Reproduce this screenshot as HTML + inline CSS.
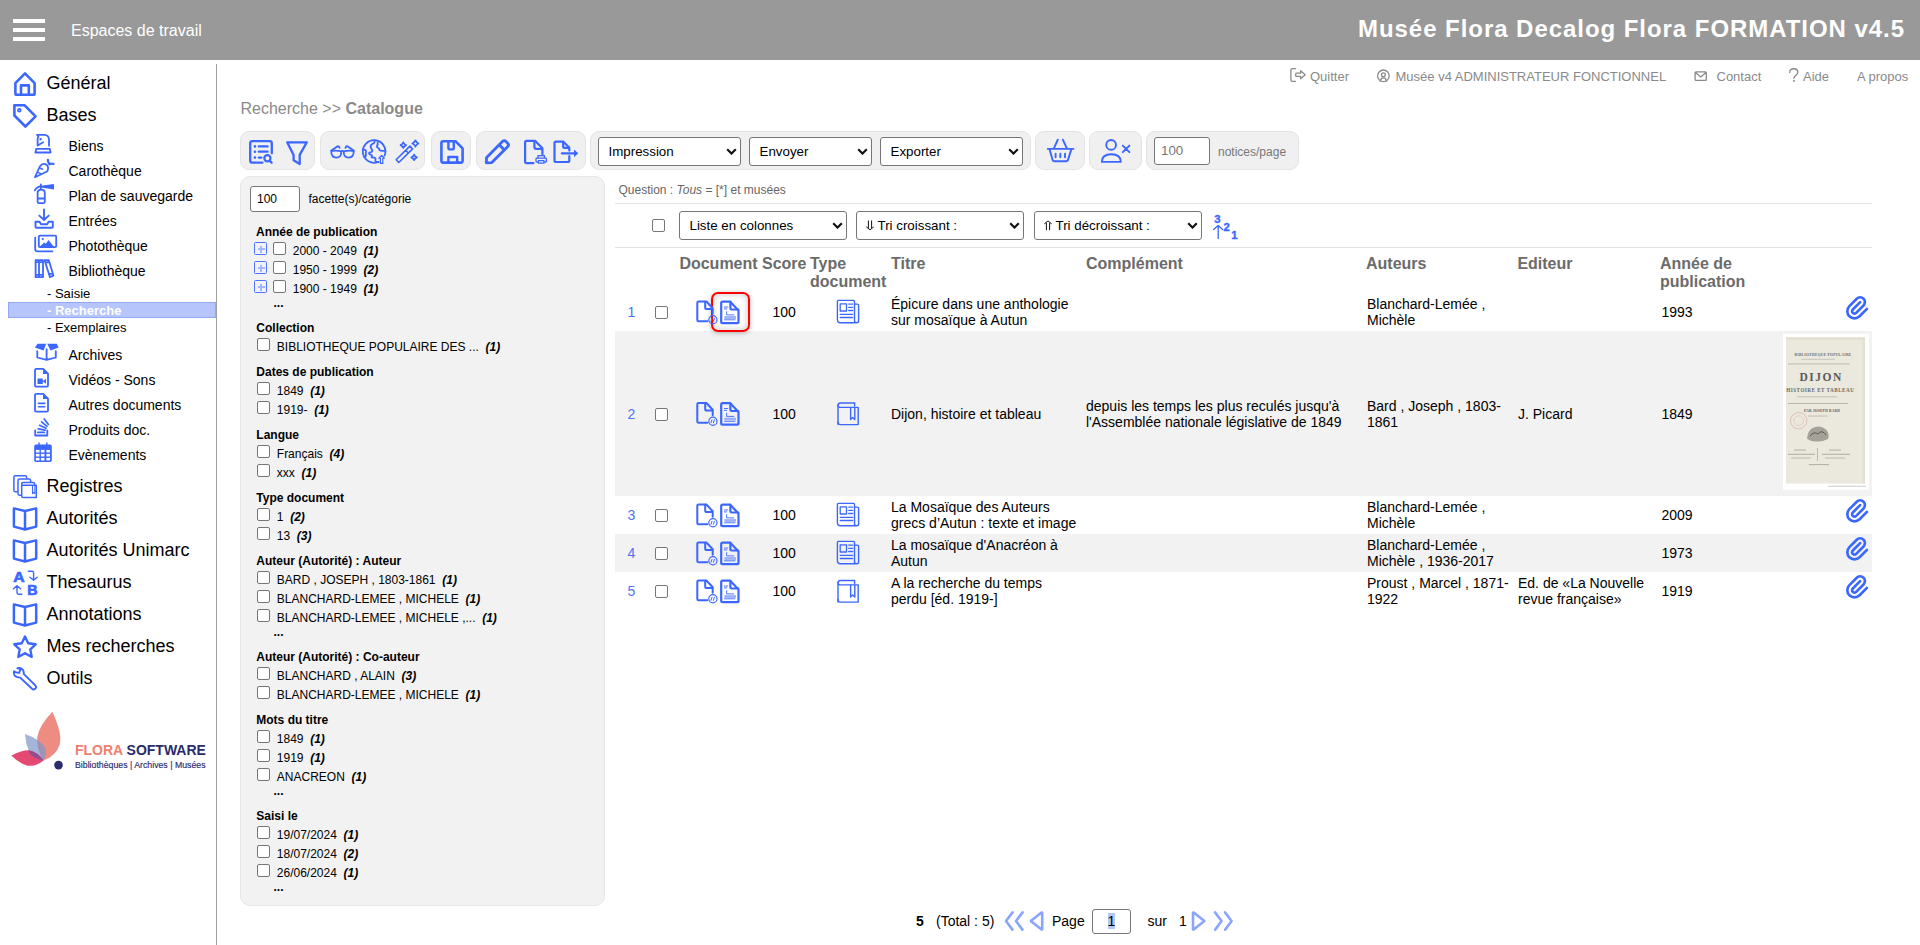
<!DOCTYPE html><html><head><meta charset="utf-8"><style>
html,body{margin:0;padding:0}
body{width:1920px;height:945px;overflow:hidden;position:relative;background:#fff;font-family:"Liberation Sans",sans-serif}
.t{position:absolute;white-space:nowrap}
.b{position:absolute}
.ic{position:absolute;overflow:visible}
.cb{position:absolute;border:1px solid #767676;border-radius:2px;background:#fff}
.sel{position:absolute;border:1px solid #767676;border-radius:3px;background:#fff;color:#000;white-space:nowrap}
.inp{position:absolute;border:1px solid #767676;border-radius:3px;background:#fff;color:#000;white-space:nowrap}
</style></head><body>
<div class="b" style="left:0px;top:0px;width:1920px;height:60px;background:#999"></div>
<div class="b" style="left:13px;top:19px;width:32px;height:4px;background:#fff"></div>
<div class="b" style="left:13px;top:28px;width:32px;height:4px;background:#fff"></div>
<div class="b" style="left:13px;top:37px;width:32px;height:4px;background:#fff"></div>
<div class="t" style="left:71px;top:23.00px;font-size:16px;line-height:16px;font-weight:normal;color:#fff;font-style:normal;">Espaces de travail</div>
<div class="t" style="right:15px;top:14px;font-size:24px;line-height:30px;font-weight:bold;color:#fff;letter-spacing:0.95px">Musée Flora Decalog Flora FORMATION v4.5</div>
<div class="b" style="left:216px;top:64px;width:1px;height:881px;background:#a0a0a0"></div>
<div class="t" style="left:46.4px;top:74.00px;font-size:18px;line-height:18px;font-weight:normal;color:#000;font-style:normal;">Général</div>
<div class="t" style="left:46.4px;top:106.00px;font-size:18px;line-height:18px;font-weight:normal;color:#000;font-style:normal;">Bases</div>
<div class="t" style="left:46.4px;top:477.00px;font-size:18px;line-height:18px;font-weight:normal;color:#000;font-style:normal;">Registres</div>
<div class="t" style="left:46.4px;top:509.00px;font-size:18px;line-height:18px;font-weight:normal;color:#000;font-style:normal;">Autorités</div>
<div class="t" style="left:46.4px;top:541.00px;font-size:18px;line-height:18px;font-weight:normal;color:#000;font-style:normal;">Autorités Unimarc</div>
<div class="t" style="left:46.4px;top:573.00px;font-size:18px;line-height:18px;font-weight:normal;color:#000;font-style:normal;">Thesaurus</div>
<div class="t" style="left:46.4px;top:605.00px;font-size:18px;line-height:18px;font-weight:normal;color:#000;font-style:normal;">Annotations</div>
<div class="t" style="left:46.4px;top:637.00px;font-size:18px;line-height:18px;font-weight:normal;color:#000;font-style:normal;">Mes recherches</div>
<div class="t" style="left:46.4px;top:669.00px;font-size:18px;line-height:18px;font-weight:normal;color:#000;font-style:normal;">Outils</div>
<div class="t" style="left:68.5px;top:139.00px;font-size:14px;line-height:14px;font-weight:normal;color:#000;font-style:normal;">Biens</div>
<div class="t" style="left:68.5px;top:164.00px;font-size:14px;line-height:14px;font-weight:normal;color:#000;font-style:normal;">Carothèque</div>
<div class="t" style="left:68.5px;top:189.00px;font-size:14px;line-height:14px;font-weight:normal;color:#000;font-style:normal;">Plan de sauvegarde</div>
<div class="t" style="left:68.5px;top:214.00px;font-size:14px;line-height:14px;font-weight:normal;color:#000;font-style:normal;">Entrées</div>
<div class="t" style="left:68.5px;top:239.00px;font-size:14px;line-height:14px;font-weight:normal;color:#000;font-style:normal;">Photothèque</div>
<div class="t" style="left:68.5px;top:264.00px;font-size:14px;line-height:14px;font-weight:normal;color:#000;font-style:normal;">Bibliothèque</div>
<div class="t" style="left:68.5px;top:348.00px;font-size:14px;line-height:14px;font-weight:normal;color:#000;font-style:normal;">Archives</div>
<div class="t" style="left:68.5px;top:373.00px;font-size:14px;line-height:14px;font-weight:normal;color:#000;font-style:normal;">Vidéos - Sons</div>
<div class="t" style="left:68.5px;top:398.00px;font-size:14px;line-height:14px;font-weight:normal;color:#000;font-style:normal;">Autres documents</div>
<div class="t" style="left:68.5px;top:423.00px;font-size:14px;line-height:14px;font-weight:normal;color:#000;font-style:normal;">Produits doc.</div>
<div class="t" style="left:68.5px;top:448.00px;font-size:14px;line-height:14px;font-weight:normal;color:#000;font-style:normal;">Evènements</div>
<div class="b" style="left:8px;top:302px;width:206px;height:14px;background:#b6c5fb;border:1px solid #93a9f7"></div>
<div class="t" style="left:47px;top:287.00px;font-size:13px;line-height:13px;font-weight:normal;color:#000;font-style:normal;">- Saisie</div>
<div class="t" style="left:47px;top:304.00px;font-size:13px;line-height:13px;font-weight:bold;color:#fff;font-style:normal;">- Recherche</div>
<div class="t" style="left:47px;top:321.00px;font-size:13px;line-height:13px;font-weight:normal;color:#000;font-style:normal;">- Exemplaires</div>
<div class="t" style="left:1310px;top:70.00px;font-size:13px;line-height:13px;font-weight:normal;color:#8a8a8a;font-style:normal;">Quitter</div>
<div class="t" style="left:1395.5px;top:70.00px;font-size:13px;line-height:13px;font-weight:normal;color:#8a8a8a;font-style:normal;">Musée v4 ADMINISTRATEUR FONCTIONNEL</div>
<div class="t" style="left:1716.5px;top:70.00px;font-size:13px;line-height:13px;font-weight:normal;color:#8a8a8a;font-style:normal;">Contact</div>
<div class="t" style="left:1803px;top:70.00px;font-size:13px;line-height:13px;font-weight:normal;color:#8a8a8a;font-style:normal;">Aide</div>
<div class="t" style="left:1857px;top:70.00px;font-size:13px;line-height:13px;font-weight:normal;color:#8a8a8a;font-style:normal;">A propos</div>
<div class="t" style="left:240.5px;top:101.00px;font-size:16px;line-height:16px;font-weight:normal;color:#8a8a8a;font-style:normal;">Recherche &gt;&gt; <b>Catalogue</b></div>
<div class="b" style="left:240px;top:131px;width:75px;height:39px;background:#f0f0f0;border:1px solid #e4e4e4;border-radius:9px;box-sizing:border-box"></div>
<div class="b" style="left:320px;top:131px;width:105px;height:39px;background:#f0f0f0;border:1px solid #e4e4e4;border-radius:9px;box-sizing:border-box"></div>
<div class="b" style="left:431px;top:131px;width:40px;height:39px;background:#f0f0f0;border:1px solid #e4e4e4;border-radius:9px;box-sizing:border-box"></div>
<div class="b" style="left:476px;top:131px;width:110px;height:39px;background:#f0f0f0;border:1px solid #e4e4e4;border-radius:9px;box-sizing:border-box"></div>
<div class="b" style="left:590px;top:131px;width:441px;height:39px;background:#f0f0f0;border:1px solid #e4e4e4;border-radius:9px;box-sizing:border-box"></div>
<div class="b" style="left:1035px;top:131px;width:50px;height:39px;background:#f0f0f0;border:1px solid #e4e4e4;border-radius:9px;box-sizing:border-box"></div>
<div class="b" style="left:1089px;top:131px;width:53px;height:39px;background:#f0f0f0;border:1px solid #e4e4e4;border-radius:9px;box-sizing:border-box"></div>
<div class="b" style="left:1146px;top:131px;width:153px;height:39px;background:#f0f0f0;border:1px solid #e4e4e4;border-radius:9px;box-sizing:border-box"></div>
<div class="sel" style="left:598px;top:137px;width:141px;height:27px;font-size:13.33px;line-height:27px"><span style="padding-left:9.5px">Impression</span><svg style="position:absolute;right:2.6px;top:9.9px" width="11" height="7.2" viewBox="0 0 11 7.2"><path d="M1.2 1.2 L5.5 5.6 L9.8 1.2" stroke="#111" stroke-width="2.1" fill="none"/></svg></div>
<div class="sel" style="left:749px;top:137px;width:121px;height:27px;font-size:13.33px;line-height:27px"><span style="padding-left:9.5px">Envoyer</span><svg style="position:absolute;right:2.6px;top:9.9px" width="11" height="7.2" viewBox="0 0 11 7.2"><path d="M1.2 1.2 L5.5 5.6 L9.8 1.2" stroke="#111" stroke-width="2.1" fill="none"/></svg></div>
<div class="sel" style="left:880px;top:137px;width:141px;height:27px;font-size:13.33px;line-height:27px"><span style="padding-left:9.5px">Exporter</span><svg style="position:absolute;right:2.6px;top:9.9px" width="11" height="7.2" viewBox="0 0 11 7.2"><path d="M1.2 1.2 L5.5 5.6 L9.8 1.2" stroke="#111" stroke-width="2.1" fill="none"/></svg></div>
<div class="inp" style="left:1154px;top:137px;width:54px;height:26px;font-size:13.33px;line-height:26px;color:#777;padding-left:0"><span style="padding-left:6px">100</span></div>
<div class="t" style="left:1218px;top:146.00px;font-size:12px;line-height:12px;font-weight:normal;color:#777;font-style:normal;">notices/page</div>
<div class="b" style="left:240px;top:176px;width:365px;height:730px;background:#f2f2f2;border:1px solid #e6e6e6;border-radius:10px;box-sizing:border-box"></div>
<div class="inp" style="left:250px;top:186px;width:48px;height:24px;font-size:12px;line-height:24px"><span style="padding-left:6px">100</span></div>
<div class="t" style="left:308.5px;top:193.00px;font-size:12px;line-height:12px;font-weight:normal;color:#000;font-style:normal;">facette(s)/catégorie</div>
<div class="t" style="left:256px;top:226.00px;font-size:12px;line-height:12px;font-weight:bold;color:#000;font-style:normal;">Année de publication</div>
<div class="b" style="left:254px;top:242px;width:11.4px;height:11.4px;border:1.3px solid #4f72ff;border-radius:1.5px"></div>
<div class="b" style="left:257.5px;top:248.0px;width:7px;height:2px;background:#a3b6ff"></div>
<div class="b" style="left:260.0px;top:245.5px;width:2px;height:7px;background:#a3b6ff"></div>
<div class="cb" style="left:273px;top:242px;width:11px;height:11px"></div>
<div class="t" style="left:292.75px;top:245.00px;font-size:12px;line-height:12px;font-weight:normal;color:#000;font-style:normal;">2000 - 2049&nbsp;&nbsp;<b><i>(1)</i></b></div>
<div class="b" style="left:254px;top:261px;width:11.4px;height:11.4px;border:1.3px solid #4f72ff;border-radius:1.5px"></div>
<div class="b" style="left:257.5px;top:267.0px;width:7px;height:2px;background:#a3b6ff"></div>
<div class="b" style="left:260.0px;top:264.5px;width:2px;height:7px;background:#a3b6ff"></div>
<div class="cb" style="left:273px;top:261px;width:11px;height:11px"></div>
<div class="t" style="left:292.75px;top:264.00px;font-size:12px;line-height:12px;font-weight:normal;color:#000;font-style:normal;">1950 - 1999&nbsp;&nbsp;<b><i>(2)</i></b></div>
<div class="b" style="left:254px;top:280px;width:11.4px;height:11.4px;border:1.3px solid #4f72ff;border-radius:1.5px"></div>
<div class="b" style="left:257.5px;top:286.0px;width:7px;height:2px;background:#a3b6ff"></div>
<div class="b" style="left:260.0px;top:283.5px;width:2px;height:7px;background:#a3b6ff"></div>
<div class="cb" style="left:273px;top:280px;width:11px;height:11px"></div>
<div class="t" style="left:292.75px;top:283.00px;font-size:12px;line-height:12px;font-weight:normal;color:#000;font-style:normal;">1900 - 1949&nbsp;&nbsp;<b><i>(1)</i></b></div>
<div class="t" style="left:273.5px;top:297.00px;font-size:12px;line-height:12px;font-weight:bold;color:#000;font-style:normal;">...</div>
<div class="t" style="left:256.3px;top:322.00px;font-size:12px;line-height:12px;font-weight:bold;color:#000;font-style:normal;">Collection</div>
<div class="cb" style="left:257px;top:338px;width:11px;height:11px"></div>
<div class="t" style="left:276.8px;top:341.00px;font-size:12px;line-height:12px;font-weight:normal;color:#000;font-style:normal;">BIBLIOTHEQUE POPULAIRE DES ...&nbsp;&nbsp;<b><i>(1)</i></b></div>
<div class="t" style="left:256.3px;top:366.00px;font-size:12px;line-height:12px;font-weight:bold;color:#000;font-style:normal;">Dates de publication</div>
<div class="cb" style="left:257px;top:382px;width:11px;height:11px"></div>
<div class="t" style="left:276.8px;top:385.00px;font-size:12px;line-height:12px;font-weight:normal;color:#000;font-style:normal;">1849&nbsp;&nbsp;<b><i>(1)</i></b></div>
<div class="cb" style="left:257px;top:401px;width:11px;height:11px"></div>
<div class="t" style="left:276.8px;top:404.00px;font-size:12px;line-height:12px;font-weight:normal;color:#000;font-style:normal;">1919-&nbsp;&nbsp;<b><i>(1)</i></b></div>
<div class="t" style="left:256.3px;top:429.00px;font-size:12px;line-height:12px;font-weight:bold;color:#000;font-style:normal;">Langue</div>
<div class="cb" style="left:257px;top:445px;width:11px;height:11px"></div>
<div class="t" style="left:276.8px;top:448.00px;font-size:12px;line-height:12px;font-weight:normal;color:#000;font-style:normal;">Français&nbsp;&nbsp;<b><i>(4)</i></b></div>
<div class="cb" style="left:257px;top:464px;width:11px;height:11px"></div>
<div class="t" style="left:276.8px;top:467.00px;font-size:12px;line-height:12px;font-weight:normal;color:#000;font-style:normal;">xxx&nbsp;&nbsp;<b><i>(1)</i></b></div>
<div class="t" style="left:256.3px;top:492.00px;font-size:12px;line-height:12px;font-weight:bold;color:#000;font-style:normal;">Type document</div>
<div class="cb" style="left:257px;top:508px;width:11px;height:11px"></div>
<div class="t" style="left:276.8px;top:511.00px;font-size:12px;line-height:12px;font-weight:normal;color:#000;font-style:normal;">1&nbsp;&nbsp;<b><i>(2)</i></b></div>
<div class="cb" style="left:257px;top:527px;width:11px;height:11px"></div>
<div class="t" style="left:276.8px;top:530.00px;font-size:12px;line-height:12px;font-weight:normal;color:#000;font-style:normal;">13&nbsp;&nbsp;<b><i>(3)</i></b></div>
<div class="t" style="left:256.3px;top:555.00px;font-size:12px;line-height:12px;font-weight:bold;color:#000;font-style:normal;">Auteur (Autorité) : Auteur</div>
<div class="cb" style="left:257px;top:571px;width:11px;height:11px"></div>
<div class="t" style="left:276.8px;top:574.00px;font-size:12px;line-height:12px;font-weight:normal;color:#000;font-style:normal;">BARD , JOSEPH , 1803-1861&nbsp;&nbsp;<b><i>(1)</i></b></div>
<div class="cb" style="left:257px;top:590px;width:11px;height:11px"></div>
<div class="t" style="left:276.8px;top:593.00px;font-size:12px;line-height:12px;font-weight:normal;color:#000;font-style:normal;">BLANCHARD-LEMEE , MICHELE&nbsp;&nbsp;<b><i>(1)</i></b></div>
<div class="cb" style="left:257px;top:609px;width:11px;height:11px"></div>
<div class="t" style="left:276.8px;top:612.00px;font-size:12px;line-height:12px;font-weight:normal;color:#000;font-style:normal;">BLANCHARD-LEMEE , MICHELE ,...&nbsp;&nbsp;<b><i>(1)</i></b></div>
<div class="t" style="left:273.5px;top:626.00px;font-size:12px;line-height:12px;font-weight:bold;color:#000;font-style:normal;">...</div>
<div class="t" style="left:256.3px;top:651.00px;font-size:12px;line-height:12px;font-weight:bold;color:#000;font-style:normal;">Auteur (Autorité) : Co-auteur</div>
<div class="cb" style="left:257px;top:667px;width:11px;height:11px"></div>
<div class="t" style="left:276.8px;top:670.00px;font-size:12px;line-height:12px;font-weight:normal;color:#000;font-style:normal;">BLANCHARD , ALAIN&nbsp;&nbsp;<b><i>(3)</i></b></div>
<div class="cb" style="left:257px;top:686px;width:11px;height:11px"></div>
<div class="t" style="left:276.8px;top:689.00px;font-size:12px;line-height:12px;font-weight:normal;color:#000;font-style:normal;">BLANCHARD-LEMEE , MICHELE&nbsp;&nbsp;<b><i>(1)</i></b></div>
<div class="t" style="left:256.3px;top:714.00px;font-size:12px;line-height:12px;font-weight:bold;color:#000;font-style:normal;">Mots du titre</div>
<div class="cb" style="left:257px;top:730px;width:11px;height:11px"></div>
<div class="t" style="left:276.8px;top:733.00px;font-size:12px;line-height:12px;font-weight:normal;color:#000;font-style:normal;">1849&nbsp;&nbsp;<b><i>(1)</i></b></div>
<div class="cb" style="left:257px;top:749px;width:11px;height:11px"></div>
<div class="t" style="left:276.8px;top:752.00px;font-size:12px;line-height:12px;font-weight:normal;color:#000;font-style:normal;">1919&nbsp;&nbsp;<b><i>(1)</i></b></div>
<div class="cb" style="left:257px;top:768px;width:11px;height:11px"></div>
<div class="t" style="left:276.8px;top:771.00px;font-size:12px;line-height:12px;font-weight:normal;color:#000;font-style:normal;">ANACREON&nbsp;&nbsp;<b><i>(1)</i></b></div>
<div class="t" style="left:273.5px;top:785.00px;font-size:12px;line-height:12px;font-weight:bold;color:#000;font-style:normal;">...</div>
<div class="t" style="left:256.3px;top:810.00px;font-size:12px;line-height:12px;font-weight:bold;color:#000;font-style:normal;">Saisi le</div>
<div class="cb" style="left:257px;top:826px;width:11px;height:11px"></div>
<div class="t" style="left:276.8px;top:829.00px;font-size:12px;line-height:12px;font-weight:normal;color:#000;font-style:normal;">19/07/2024&nbsp;&nbsp;<b><i>(1)</i></b></div>
<div class="cb" style="left:257px;top:845px;width:11px;height:11px"></div>
<div class="t" style="left:276.8px;top:848.00px;font-size:12px;line-height:12px;font-weight:normal;color:#000;font-style:normal;">18/07/2024&nbsp;&nbsp;<b><i>(2)</i></b></div>
<div class="cb" style="left:257px;top:864px;width:11px;height:11px"></div>
<div class="t" style="left:276.8px;top:867.00px;font-size:12px;line-height:12px;font-weight:normal;color:#000;font-style:normal;">26/06/2024&nbsp;&nbsp;<b><i>(1)</i></b></div>
<div class="t" style="left:273.5px;top:881.00px;font-size:12px;line-height:12px;font-weight:bold;color:#000;font-style:normal;">...</div>
<div class="t" style="left:618.5px;top:184.00px;font-size:12px;line-height:12px;font-weight:normal;color:#666;font-style:normal;">Question : <i>Tous</i> = [*] et musées</div>
<div class="b" style="left:615px;top:203px;width:1257px;height:1px;background:#e2e2e2"></div>
<div class="cb" style="left:652px;top:219px;width:11px;height:11px"></div>
<div class="sel" style="left:679px;top:211px;width:166px;height:27px;font-size:13.33px;line-height:27px"><span style="padding-left:9.5px">Liste en colonnes</span><svg style="position:absolute;right:2.6px;top:9.9px" width="11" height="7.2" viewBox="0 0 11 7.2"><path d="M1.2 1.2 L5.5 5.6 L9.8 1.2" stroke="#111" stroke-width="2.1" fill="none"/></svg></div>
<div class="sel" style="left:856px;top:211px;width:166px;height:27px;font-size:13.33px;line-height:27px"><span style="padding-left:20.5px">Tri croissant :</span><svg style="position:absolute;right:2.6px;top:9.9px" width="11" height="7.2" viewBox="0 0 11 7.2"><path d="M1.2 1.2 L5.5 5.6 L9.8 1.2" stroke="#111" stroke-width="2.1" fill="none"/></svg></div>
<div class="sel" style="left:1034px;top:211px;width:166px;height:27px;font-size:13.33px;line-height:27px"><span style="padding-left:20.5px">Tri décroissant :</span><svg style="position:absolute;right:2.6px;top:9.9px" width="11" height="7.2" viewBox="0 0 11 7.2"><path d="M1.2 1.2 L5.5 5.6 L9.8 1.2" stroke="#111" stroke-width="2.1" fill="none"/></svg></div>
<div class="b" style="left:615px;top:247px;width:1257px;height:1px;background:#e2e2e2"></div>
<div class="t" style="left:679.4px;top:256.00px;font-size:16px;line-height:16px;font-weight:bold;color:#6b6b6b;font-style:normal;">Document</div>
<div class="t" style="left:762px;top:256.00px;font-size:16px;line-height:16px;font-weight:bold;color:#6b6b6b;font-style:normal;">Score</div>
<div class="t" style="left:810px;top:256.00px;font-size:16px;line-height:16px;font-weight:bold;color:#6b6b6b;font-style:normal;">Type</div>
<div class="t" style="left:891px;top:256.00px;font-size:16px;line-height:16px;font-weight:bold;color:#6b6b6b;font-style:normal;">Titre</div>
<div class="t" style="left:1086px;top:256.00px;font-size:16px;line-height:16px;font-weight:bold;color:#6b6b6b;font-style:normal;">Complément</div>
<div class="t" style="left:1366px;top:256.00px;font-size:16px;line-height:16px;font-weight:bold;color:#6b6b6b;font-style:normal;">Auteurs</div>
<div class="t" style="left:1517.4px;top:256.00px;font-size:16px;line-height:16px;font-weight:bold;color:#6b6b6b;font-style:normal;">Editeur</div>
<div class="t" style="left:1660px;top:256.00px;font-size:16px;line-height:16px;font-weight:bold;color:#6b6b6b;font-style:normal;">Année de</div>
<div class="t" style="left:810px;top:274.00px;font-size:16px;line-height:16px;font-weight:bold;color:#6b6b6b;font-style:normal;">document</div>
<div class="t" style="left:1660px;top:274.00px;font-size:16px;line-height:16px;font-weight:bold;color:#6b6b6b;font-style:normal;">publication</div>
<div class="b" style="left:615px;top:331px;width:1257px;height:165px;background:#f2f2f2"></div>
<div class="b" style="left:615px;top:534px;width:1257px;height:38px;background:#f2f2f2"></div>
<div class="t" style="left:627.5px;top:305.00px;font-size:14px;line-height:14px;font-weight:normal;color:#4f72f7;font-style:normal;">1</div>
<div class="cb" style="left:655px;top:306px;width:11px;height:11px"></div>
<div class="t" style="left:772.5px;top:305.00px;font-size:14px;line-height:14px;font-weight:normal;color:#000;font-style:normal;">100</div>
<div class="t" style="left:891px;top:297.00px;font-size:14px;line-height:14px;font-weight:normal;color:#000;font-style:normal;">Épicure dans une anthologie</div>
<div class="t" style="left:891px;top:313.00px;font-size:14px;line-height:14px;font-weight:normal;color:#000;font-style:normal;">sur mosaïque à Autun</div>
<div class="t" style="left:1367px;top:297.00px;font-size:14px;line-height:14px;font-weight:normal;color:#000;font-style:normal;">Blanchard-Lemée ,</div>
<div class="t" style="left:1367px;top:313.00px;font-size:14px;line-height:14px;font-weight:normal;color:#000;font-style:normal;">Michèle</div>
<div class="t" style="left:1661.5px;top:305.00px;font-size:14px;line-height:14px;font-weight:normal;color:#000;font-style:normal;">1993</div>
<div class="t" style="left:627.5px;top:407.00px;font-size:14px;line-height:14px;font-weight:normal;color:#4f72f7;font-style:normal;">2</div>
<div class="cb" style="left:655px;top:408px;width:11px;height:11px"></div>
<div class="t" style="left:772.5px;top:407.00px;font-size:14px;line-height:14px;font-weight:normal;color:#000;font-style:normal;">100</div>
<div class="t" style="left:891px;top:407.00px;font-size:14px;line-height:14px;font-weight:normal;color:#000;font-style:normal;">Dijon, histoire et tableau</div>
<div class="t" style="left:1086px;top:399.00px;font-size:14px;line-height:14px;font-weight:normal;color:#000;font-style:normal;">depuis les temps les plus reculés jusqu'à</div>
<div class="t" style="left:1086px;top:415.00px;font-size:14px;line-height:14px;font-weight:normal;color:#000;font-style:normal;">l'Assemblée nationale législative de 1849</div>
<div class="t" style="left:1367px;top:399.00px;font-size:14px;line-height:14px;font-weight:normal;color:#000;font-style:normal;">Bard , Joseph , 1803-</div>
<div class="t" style="left:1367px;top:415.00px;font-size:14px;line-height:14px;font-weight:normal;color:#000;font-style:normal;">1861</div>
<div class="t" style="left:1518px;top:407.00px;font-size:14px;line-height:14px;font-weight:normal;color:#000;font-style:normal;">J. Picard</div>
<div class="t" style="left:1661.5px;top:407.00px;font-size:14px;line-height:14px;font-weight:normal;color:#000;font-style:normal;">1849</div>
<div class="t" style="left:627.5px;top:508.00px;font-size:14px;line-height:14px;font-weight:normal;color:#4f72f7;font-style:normal;">3</div>
<div class="cb" style="left:655px;top:509px;width:11px;height:11px"></div>
<div class="t" style="left:772.5px;top:508.00px;font-size:14px;line-height:14px;font-weight:normal;color:#000;font-style:normal;">100</div>
<div class="t" style="left:891px;top:500.00px;font-size:14px;line-height:14px;font-weight:normal;color:#000;font-style:normal;">La Mosaïque des Auteurs</div>
<div class="t" style="left:891px;top:516.00px;font-size:14px;line-height:14px;font-weight:normal;color:#000;font-style:normal;">grecs d’Autun : texte et image</div>
<div class="t" style="left:1367px;top:500.00px;font-size:14px;line-height:14px;font-weight:normal;color:#000;font-style:normal;">Blanchard-Lemée ,</div>
<div class="t" style="left:1367px;top:516.00px;font-size:14px;line-height:14px;font-weight:normal;color:#000;font-style:normal;">Michèle</div>
<div class="t" style="left:1661.5px;top:508.00px;font-size:14px;line-height:14px;font-weight:normal;color:#000;font-style:normal;">2009</div>
<div class="t" style="left:627.5px;top:546.00px;font-size:14px;line-height:14px;font-weight:normal;color:#4f72f7;font-style:normal;">4</div>
<div class="cb" style="left:655px;top:547px;width:11px;height:11px"></div>
<div class="t" style="left:772.5px;top:546.00px;font-size:14px;line-height:14px;font-weight:normal;color:#000;font-style:normal;">100</div>
<div class="t" style="left:891px;top:538.00px;font-size:14px;line-height:14px;font-weight:normal;color:#000;font-style:normal;">La mosaïque d'Anacréon à</div>
<div class="t" style="left:891px;top:554.00px;font-size:14px;line-height:14px;font-weight:normal;color:#000;font-style:normal;">Autun</div>
<div class="t" style="left:1367px;top:538.00px;font-size:14px;line-height:14px;font-weight:normal;color:#000;font-style:normal;">Blanchard-Lemée ,</div>
<div class="t" style="left:1367px;top:554.00px;font-size:14px;line-height:14px;font-weight:normal;color:#000;font-style:normal;">Michèle , 1936-2017</div>
<div class="t" style="left:1661.5px;top:546.00px;font-size:14px;line-height:14px;font-weight:normal;color:#000;font-style:normal;">1973</div>
<div class="t" style="left:627.5px;top:584.00px;font-size:14px;line-height:14px;font-weight:normal;color:#4f72f7;font-style:normal;">5</div>
<div class="cb" style="left:655px;top:585px;width:11px;height:11px"></div>
<div class="t" style="left:772.5px;top:584.00px;font-size:14px;line-height:14px;font-weight:normal;color:#000;font-style:normal;">100</div>
<div class="t" style="left:891px;top:576.00px;font-size:14px;line-height:14px;font-weight:normal;color:#000;font-style:normal;">A la recherche du temps</div>
<div class="t" style="left:891px;top:592.00px;font-size:14px;line-height:14px;font-weight:normal;color:#000;font-style:normal;">perdu [éd. 1919-]</div>
<div class="t" style="left:1367px;top:576.00px;font-size:14px;line-height:14px;font-weight:normal;color:#000;font-style:normal;">Proust , Marcel , 1871-</div>
<div class="t" style="left:1367px;top:592.00px;font-size:14px;line-height:14px;font-weight:normal;color:#000;font-style:normal;">1922</div>
<div class="t" style="left:1518px;top:576.00px;font-size:14px;line-height:14px;font-weight:normal;color:#000;font-style:normal;">Ed. de «La Nouvelle</div>
<div class="t" style="left:1518px;top:592.00px;font-size:14px;line-height:14px;font-weight:normal;color:#000;font-style:normal;">revue française»</div>
<div class="t" style="left:1661.5px;top:584.00px;font-size:14px;line-height:14px;font-weight:normal;color:#000;font-style:normal;">1919</div>
<div class="b" style="left:710.5px;top:291.5px;width:35px;height:36px;border:2px solid #f00;border-radius:7px;box-shadow:0 1px 5px rgba(0,0,0,0.28), inset 0 0 7px rgba(0,0,0,0.22)"></div>
<div class="t" style="left:916px;top:914.00px;font-size:14px;line-height:14px;font-weight:bold;color:#000;font-style:normal;">5</div>
<div class="t" style="left:936px;top:914.00px;font-size:14px;line-height:14px;font-weight:normal;color:#000;font-style:normal;">(Total : 5)</div>
<div class="t" style="left:1052px;top:914.00px;font-size:14px;line-height:14px;font-weight:normal;color:#000;font-style:normal;">Page</div>
<div class="inp" style="left:1092px;top:909px;width:37px;height:23px;font-size:14px;line-height:23px;text-align:center"><span style="background:#b3c8f5">1</span></div>
<div class="t" style="left:1147.5px;top:914.00px;font-size:14px;line-height:14px;font-weight:normal;color:#000;font-style:normal;">sur</div>
<div class="t" style="left:1179px;top:914.00px;font-size:14px;line-height:14px;font-weight:normal;color:#000;font-style:normal;">1</div>
<svg style="position:absolute;left:0;top:0;overflow:visible" width="1920" height="945"><defs><filter id="sh" x="-30%" y="-30%" width="160%" height="160%"><feDropShadow dx="0" dy="1" stdDeviation="1.5" flood-color="#000" flood-opacity="0.3"/></filter></defs><path d="M15.4 83.2 L25 73.4 L34.6 83.2 V93.4 Q34.6 94.7 33.3 94.7 H16.7 Q15.4 94.7 15.4 93.4 Z" stroke="#3c67ff" stroke-width="2.6" fill="none" stroke-linecap="round" stroke-linejoin="round" /><path d="M21 94.7 V85.4 H28.8 V94.7" stroke="#3c67ff" stroke-width="2.6" fill="none" stroke-linecap="round" stroke-linejoin="round" /><path d="M14.4 105.3 H24.6 L35.6 116.3 L25.4 126.5 L14.4 115.5 Z" stroke="#3c67ff" stroke-width="2.6" fill="none" stroke-linecap="round" stroke-linejoin="round" /><circle cx="19.3" cy="110.2" r="1.4" stroke="#3c67ff" stroke-width="1.7" fill="none"/><path d="M37.3 134.9 H45 Q49 135.5 49 140 V145.8" stroke="#3c67ff" stroke-width="1.8" fill="none" stroke-linecap="round" stroke-linejoin="round" /><path d="M37.3 134.9 Q39 136.3 37.9 137.9 Q37.5 138.5 37.6 139.6 V145.5 L43.2 142.3" stroke="#3c67ff" stroke-width="1.8" fill="none" stroke-linecap="round" stroke-linejoin="round" /><circle cx="40.6" cy="139.3" r="0.6" stroke="#3c67ff" stroke-width="1.2" fill="none"/><path d="M36.2 148.9 H49.8 L50.6 152.5 H35.4 Z" stroke="#3c67ff" stroke-width="1.8" fill="none" stroke-linecap="round" stroke-linejoin="round" /><path d="M35 177.2 L39.8 166.5 Q42.5 162.6 46.5 164.6 Q49.5 167.5 47 171.5 Z" stroke="#3c67ff" stroke-width="1.8" fill="none" stroke-linecap="round" stroke-linejoin="round" /><path d="M40.4 168.3 L42.5 169.3 M38.4 172.6 L40.8 173.6" stroke="#3c67ff" stroke-width="1.5" fill="none" stroke-linecap="round" stroke-linejoin="round" /><path d="M47.9 159.9 Q47.8 162.2 49.2 163.6" stroke="#3c67ff" stroke-width="2.3" fill="none" stroke-linecap="round" stroke-linejoin="round" /><path d="M49.6 164.2 Q51.6 163.2 53.5 164" stroke="#3c67ff" stroke-width="2.3" fill="none" stroke-linecap="round" stroke-linejoin="round" /><path d="M40.8 184.5 V189" stroke="#3c67ff" stroke-width="1.8" fill="none" stroke-linecap="round" stroke-linejoin="round" /><path d="M34.8 190.4 Q37 186.6 41 186.4" stroke="#3c67ff" stroke-width="1.8" fill="none" stroke-linecap="round" stroke-linejoin="round" /><path d="M41 185.7 L54 184 V189.5 L41 187.4 Z" fill="#3c67ff" stroke="none" /><path d="M37.6 193 Q37.6 189.6 41.2 189.6 Q44.8 189.6 44.8 193 V201.8 Q44.8 203.2 43.4 203.2 H39 Q37.6 203.2 37.6 201.8 Z M37.6 198.5 H44.8" stroke="#3c67ff" stroke-width="1.8" fill="none" stroke-linecap="round" stroke-linejoin="round" /><path d="M44 209.5 V219.5 M39.3 215.6 L44 220 L48.7 215.6" stroke="#3c67ff" stroke-width="1.9" fill="none" stroke-linecap="round" stroke-linejoin="round" /><path d="M35.5 221.8 H39.6 L41 224.2 H47.2 L48.6 221.8 H52.8 V226.8 Q52.8 227.8 51.8 227.8 H36.5 Q35.5 227.8 35.5 226.8 Z" stroke="#3c67ff" stroke-width="1.9" fill="none" stroke-linecap="round" stroke-linejoin="round" /><path d="M40 235.6 H55 Q56.2 235.6 56.2 236.8 V246 Q56.2 247.2 55 247.2 H40 Q38.8 247.2 38.8 246 V236.8 Q38.8 235.6 40 235.6 Z" stroke="#3c67ff" stroke-width="1.8" fill="none" stroke-linecap="round" stroke-linejoin="round" /><path d="M39.4 247 L44.2 242.6 L45.8 243.8 L48.6 240 L54 247 Z" fill="#3c67ff" stroke="none" /><circle cx="42.8" cy="239.1" r="1.1" stroke="#3c67ff" stroke-width="0" fill="#3c67ff"/><path d="M35.2 237.6 V249 Q35.2 251.4 37.6 251.4 H52.4" stroke="#3c67ff" stroke-width="1.8" fill="none" stroke-linecap="round" stroke-linejoin="round" /><path d="M35.6 260.2 H39 V277.2 H35.6 Z M39 260.2 H43 V277.2 H39 Z M35.6 262.2 H43 M35.6 274.8 H43" stroke="#3c67ff" stroke-width="1.8" fill="none" stroke-linecap="round" stroke-linejoin="round" /><path d="M44.6 260.2 L48.8 260.2 L53.4 275.6 L49.9 277.1 Z M45.2 262.4 L49.3 262 M48.9 274.5 L52.6 273.2" stroke="#3c67ff" stroke-width="1.8" fill="none" stroke-linecap="round" stroke-linejoin="round" /><path d="M34.8 347.4 L37.6 343.7 L46.2 343.7 L43.6 350.6 Z" fill="#3c67ff" stroke="none" /><path d="M47.2 343.7 L56.8 343.7 L58.6 347.4 L50.6 350.6 Z" fill="#3c67ff" stroke="none" /><path d="M37.3 351.2 V357.5 L46.6 359.8 L55.8 357.5 V351.2 M46.6 349.2 V359.8" stroke="#3c67ff" stroke-width="1.8" fill="none" stroke-linecap="round" stroke-linejoin="round" /><path d="M36.2 368.8 H43.2 L48 373.6 V385.4 Q48 386.6 46.8 386.6 H36.2 Q35 386.6 35 385.4 V370 Q35 368.8 36.2 368.8 Z" stroke="#3c67ff" stroke-width="1.8" fill="none" stroke-linecap="round" stroke-linejoin="round" /><path d="M43 368.8 V374 H48 Z" fill="#3c67ff" stroke="none" /><path d="M37.5 378.6 H42.8 V384 H37.5 Z M42.6 381.3 L46 378.8 V383.8 Z" fill="#3c67ff" stroke="none" /><path d="M36.2 393.8 H43.2 L48 398.6 V410.4 Q48 411.6 46.8 411.6 H36.2 Q35 411.6 35 410.4 V395 Q35 393.8 36.2 393.8 Z" stroke="#3c67ff" stroke-width="1.8" fill="none" stroke-linecap="round" stroke-linejoin="round" /><path d="M43 393.8 V399 H48 Z" fill="#3c67ff" stroke="none" /><path d="M38.4 403.4 H44.8 M38.4 406.8 H44.8" stroke="#3c67ff" stroke-width="1.6" fill="none" stroke-linecap="round" stroke-linejoin="round" /><path d="M35.2 430.5 V435.5 H47.3 V430.5" stroke="#3c67ff" stroke-width="1.8" fill="none" stroke-linecap="round" stroke-linejoin="round" /><path d="M37.8 432.4 H44.4 M38.2 428.9 L45.2 430.2 M39.6 425.3 L46 428.2 M41.6 421.8 L47 426.3 M44.2 419 L48.4 424.4" stroke="#3c67ff" stroke-width="1.7" fill="none" stroke-linecap="round" stroke-linejoin="round" /><path d="M36 444.6 H50 Q51.8 444.6 51.8 446.4 V460.3 Q51.8 462.1 50 462.1 H36 Q34.2 462.1 34.2 460.3 V446.4 Q34.2 444.6 36 444.6 Z" fill="#3c67ff" stroke="none" /><rect x="35.9" y="449.9" width="3.6" height="2.6" fill="#fff"/><rect x="35.9" y="453.9" width="3.6" height="2.6" fill="#fff"/><rect x="35.9" y="457.9" width="3.6" height="2.6" fill="#fff"/><rect x="40.9" y="449.9" width="3.6" height="2.6" fill="#fff"/><rect x="40.9" y="453.9" width="3.6" height="2.6" fill="#fff"/><rect x="40.9" y="457.9" width="3.6" height="2.6" fill="#fff"/><rect x="46.4" y="449.9" width="3.6" height="2.6" fill="#fff"/><rect x="46.4" y="453.9" width="3.6" height="2.6" fill="#fff"/><rect x="46.4" y="457.9" width="3.6" height="2.6" fill="#fff"/><path d="M39 443 V445 M46.8 443 V445" stroke="#3c67ff" stroke-width="1.4" fill="none" stroke-linecap="round" stroke-linejoin="round" /><path d="M17.4 491.8 H15.3 Q13.9 491.8 13.9 490.4 V477.2 Q13.9 475.8 15.3 475.8 H25.2 Q26.6 475.8 26.6 477.2 V478.6" stroke="#3c67ff" stroke-width="1.5" fill="none" stroke-linecap="round" stroke-linejoin="round" /><path d="M21.3 495.2 H19.4 Q18 495.2 18 493.8 V480.4 Q18 479 19.4 479 H29.2 Q30.6 479 30.6 480.4 V482" stroke="#3c67ff" stroke-width="1.5" fill="none" stroke-linecap="round" stroke-linejoin="round" /><path d="M21.7 484.8 V483.8 Q21.7 482.4 23.1 482.4 H33.2 Q34.6 482.4 34.6 483.8 V484.8" stroke="#3c67ff" stroke-width="1.5" fill="none" stroke-linecap="round" stroke-linejoin="round" /><path d="M21.7 485.2 H36.3 V497.6 H23.1 Q21.7 497.6 21.7 496.2 Z" stroke="#3c67ff" stroke-width="1.5" fill="none" stroke-linecap="round" stroke-linejoin="round" /><path d="M32.5 485.6 V493.6 L33.7 492.4 L34.9 493.6 V485.6" stroke="#3c67ff" stroke-width="1.1" fill="none" stroke-linecap="round" stroke-linejoin="round" /><path d="M13.9 508.4 L25 511.0 L36.2 508.4 V526.6 L25 529.5 L13.9 526.6 Z M25 511.0 V529.5" stroke="#3c67ff" stroke-width="2.5" fill="none" stroke-linecap="round" stroke-linejoin="round" /><path d="M13.9 540.4 L25 543.0 L36.2 540.4 V558.6 L25 561.5 L13.9 558.6 Z M25 543.0 V561.5" stroke="#3c67ff" stroke-width="2.5" fill="none" stroke-linecap="round" stroke-linejoin="round" /><path d="M13.9 604.4 L25 607.0 L36.2 604.4 V622.6 L25 625.5 L13.9 622.6 Z M25 607.0 V625.5" stroke="#3c67ff" stroke-width="2.5" fill="none" stroke-linecap="round" stroke-linejoin="round" /><text x="13.2" y="581.7" font-family="Liberation Sans" font-weight="bold" font-size="14.6" fill="#3c67ff" stroke="#3c67ff" stroke-width="0.7" transform="translate(13.2 0) scale(1.08 1) translate(-13.2 0)">A</text><text x="27.3" y="594.6" font-family="Liberation Sans" font-weight="bold" font-size="14.2" fill="#3c67ff" stroke="#3c67ff" stroke-width="0.7">B</text><path d="M28.4 571.3 H32 Q33.6 571.3 33.6 573 V580 M29.9 577.3 L33.6 580.2 L37.2 577.3" stroke="#3c67ff" stroke-width="1.4" fill="none" stroke-linecap="round" stroke-linejoin="round" /><path d="M21.8 594.2 H18.6 Q17 594.2 17 592.5 V586 M13.4 588.7 L17 585.8 L20.6 588.7" stroke="#3c67ff" stroke-width="1.4" fill="none" stroke-linecap="round" stroke-linejoin="round" /><path d="M25 636.6 L28.2 643.3 L35.7 644.3 L30.3 649.4 L31.7 656.9 L25 653.3 L18.3 656.9 L19.7 649.4 L14.3 644.3 L21.8 643.3 Z" stroke="#3c67ff" stroke-width="2.4" fill="none" stroke-linecap="round" stroke-linejoin="round" /><path d="M17.3 668.3 Q21 667.3 23 670 Q24 671.8 23.7 673.8 L35.5 685.6 Q36.8 687.2 35.2 688.8 Q33.6 690.2 32 688.8 L20.2 677.6 Q16.2 677.6 14.4 675.2 Q13.4 673.2 14 671.3 Q16 673 19.2 672.8 L20.4 669.6 Q19 668.2 17.3 668.3 Z" stroke="#3c67ff" stroke-width="1.9" fill="none" stroke-linecap="round" stroke-linejoin="round" /><path d="M52.4 711.7 Q63 735 59.5 745 Q56 756 43.5 760.6 Q36.5 750 37.2 737 Q39.5 725 52.4 711.7 Z" fill="#ef8c82"/><path d="M25 733.9 Q40 739 45.5 748 Q46.6 756 43.5 760.6 Q29 756 26.4 744 Z" fill="#7d95c9" fill-opacity="0.7"/><path d="M11.3 755.4 Q22 750 29 750.2 Q38 752 43.5 760.6 Q36 766.5 27.5 765.8 Q18.5 763 11.3 755.4 Z" fill="#e33f6a" fill-opacity="0.95"/><path d="M28 750.3 Q38 752 43.5 760.6 Q31 758 28 750.3 Z" fill="#8a4f93" fill-opacity="0.9"/><circle cx="58.5" cy="765.1" r="4.3" stroke="#3c67ff" stroke-width="0" fill="#2a2c6e"/><text x="75" y="754.8" font-family="Liberation Sans" font-weight="bold" font-size="14" letter-spacing="0"><tspan fill="#ef7f72">FLORA </tspan><tspan fill="#2a2c6e">SOFTWARE</tspan></text><text x="75" y="768.4" font-family="Liberation Sans" font-weight="normal" font-size="8.75" fill="#2a2c6e" stroke="#2a2c6e" stroke-width="0.15">Bibliothèques | Archives | Musées</text><path d="M1295.6 68.7 H1292.3 Q1290.9 68.7 1290.9 70.1 V79.9 Q1290.9 81.3 1292.3 81.3 H1295.6" stroke="#8a8a8a" stroke-width="1.3" fill="none" stroke-linecap="round" stroke-linejoin="round" /><path d="M1300.6 70.8 V73.1 H1296.6 Q1295.7 73.1 1295.7 74 V75.5 Q1295.7 76.4 1296.6 76.4 H1300.6 V78.8 L1305.2 74.75 Z" stroke="#8a8a8a" stroke-width="1.3" fill="none" stroke-linecap="round" stroke-linejoin="round" /><circle cx="1383.4" cy="75.8" r="5.8" stroke="#8a8a8a" stroke-width="1.3" fill="none"/><circle cx="1383.4" cy="74.7" r="1.9" stroke="#8a8a8a" stroke-width="1.3" fill="none"/><path d="M1380.1 81.2 L1381.4 78.6 Q1381.6 78.2 1382 78.2 H1384.8 Q1385.2 78.2 1385.4 78.6 L1386.7 81.2" stroke="#8a8a8a" stroke-width="1.3" fill="none" stroke-linecap="round" stroke-linejoin="round" /><path d="M1696 71.9 H1705.4 Q1706.3 71.9 1706.3 72.8 V79.4 Q1706.3 80.3 1705.4 80.3 H1696 Q1695.1 80.3 1695.1 79.4 V72.8 Q1695.1 71.9 1696 71.9 Z M1695.4 72.6 L1700.7 76.9 L1706 72.6" stroke="#8a8a8a" stroke-width="1.3" fill="none" stroke-linecap="round" stroke-linejoin="round" /><path d="M1789.8 72.6 Q1789.6 68.7 1793.7 68.7 Q1797.8 68.7 1797.8 72.2 Q1797.8 74.2 1795.6 75.6 Q1793.9 76.7 1793.9 78.2" stroke="#8a8a8a" stroke-width="1.35" fill="none" stroke-linecap="round" stroke-linejoin="round" /><rect x="1793.1" y="80" width="1.6" height="1.8" fill="#8a8a8a"/><path d="M262.4 162.7 H252.4 Q250.2 162.7 250.2 160.5 V143.3 Q250.2 141.1 252.4 141.1 H269.6 Q271.8 141.1 271.8 143.3 V153.3" stroke="#3c67ff" stroke-width="2.3" fill="none" stroke-linecap="round" stroke-linejoin="round" /><path d="M254.9 146.4 H254.95" stroke="#3c67ff" stroke-width="2.6" fill="none" stroke-linecap="round" stroke-linejoin="round" /><path d="M254.9 151.7 H254.95" stroke="#3c67ff" stroke-width="2.6" fill="none" stroke-linecap="round" stroke-linejoin="round" /><path d="M254.9 157.6 H254.95" stroke="#3c67ff" stroke-width="2.6" fill="none" stroke-linecap="round" stroke-linejoin="round" /><path d="M258.8 146.4 H267.6 M258.8 151.7 H267.6 M258.8 157.6 H261.4" stroke="#3c67ff" stroke-width="2.3" fill="none" stroke-linecap="round" stroke-linejoin="round" /><circle cx="267.4" cy="158.3" r="3.1" stroke="#3c67ff" stroke-width="2.2" fill="none"/><path d="M269.7 160.7 L271.6 162.6" stroke="#3c67ff" stroke-width="2.3" fill="none" stroke-linecap="round" stroke-linejoin="round" /><path d="M287.2 142.3 H306.8 L299.7 154.9 V164.1 L293.6 160.3 V154.9 Z" stroke="#3c67ff" stroke-width="2.3" fill="none" stroke-linecap="round" stroke-linejoin="round" /><path d="M331.4 150.6 L337.2 146.4 Q338.8 145.8 339.6 147.8 M353.6 150.6 L347.8 146.4 Q346.2 145.8 345.4 147.8" stroke="#3c67ff" stroke-width="1.8" fill="none" stroke-linecap="round" stroke-linejoin="round" /><path d="M331.2 151 Q336.2 150.2 341.3 151.3 Q341.6 157.6 336.3 157.6 Q331.3 157.6 331.2 151 Z" stroke="#3c67ff" stroke-width="1.8" fill="none" stroke-linecap="round" stroke-linejoin="round" /><path d="M353.8 151 Q348.8 150.2 343.7 151.3 Q343.4 157.6 348.7 157.6 Q353.7 157.6 353.8 151 Z" stroke="#3c67ff" stroke-width="1.8" fill="none" stroke-linecap="round" stroke-linejoin="round" /><path d="M341.3 151.4 Q342.5 150.4 343.7 151.4" stroke="#3c67ff" stroke-width="1.8" fill="none" stroke-linecap="round" stroke-linejoin="round" /><path d="M378.4 161.9 A11.3 11.3 0 1 1 384.6 155.6" stroke="#3c67ff" stroke-width="1.8" fill="none" stroke-linecap="round"/><path d="M374.4 141.5 Q375 143 372.2 144 Q370.2 145 370.8 147.5 Q371.6 149 372.4 150.6 Q372.2 152.2 370.4 152.4 Q368.6 152.6 369.2 153.8 Q370.4 155 371.8 155.2 Q372.4 156.6 371.4 157 Q372 158 374.4 157.6 Q376 157.8 375.4 160 Q375 161.6 377 161.8 L378.4 161.8" stroke="#3c67ff" stroke-width="1.8" fill="none" stroke-linecap="round" stroke-linejoin="round" /><path d="M377.6 142.6 Q378.2 144.6 376.8 146.2 Q376.6 147.6 378.6 148.2 Q379.4 148.8 379.4 150 Q380 151 384.4 150.8" stroke="#3c67ff" stroke-width="1.8" fill="none" stroke-linecap="round" stroke-linejoin="round" /><path d="M363.1 149.6 L365.8 150.2 Q366.4 151 365.8 152.4 Q365.8 154.4 366 155.6 Q365.4 157 364.6 157.2" stroke="#3c67ff" stroke-width="1.8" fill="none" stroke-linecap="round" stroke-linejoin="round" /><path d="M380.4 163.4 V158.2 H378.8 L381.6 155.4 L384.4 158.2 H382.8 V163.4 Z" stroke="#3c67ff" stroke-width="1.2" fill="none" stroke-linecap="round" stroke-linejoin="round" /><path d="M396.11 159.75 L409.91 146.15 L412.59 148.85 L398.79 162.45 Z M405.66 150.25 L408.34 152.95" stroke="#3c67ff" stroke-width="1.6" fill="none" stroke-linecap="round" stroke-linejoin="round" /><path d="M403.3 142.29999999999998 Q404.084 144.316 406.1 145.1 Q404.084 145.884 403.3 147.9 Q402.516 145.884 400.5 145.1 Q402.516 144.316 403.3 142.29999999999998 Z" stroke="#3c67ff" stroke-width="1.7" fill="none" stroke-linecap="round" stroke-linejoin="round" /><path d="M415.4 140.4 Q416.268 142.632 418.5 143.5 Q416.268 144.368 415.4 146.6 Q414.532 144.368 412.29999999999995 143.5 Q414.532 142.632 415.4 140.4 Z" stroke="#3c67ff" stroke-width="1.7" fill="none" stroke-linecap="round" stroke-linejoin="round" /><path d="M414.1 154.6 Q414.884 156.616 416.90000000000003 157.4 Q414.884 158.184 414.1 160.20000000000002 Q413.31600000000003 158.184 411.3 157.4 Q413.31600000000003 156.616 414.1 154.6 Z" stroke="#3c67ff" stroke-width="1.7" fill="none" stroke-linecap="round" stroke-linejoin="round" /><path d="M443.2 141.2 H455.4 L462.6 148.4 V160.8 Q462.6 162.6 460.8 162.6 H443.2 Q441.4 162.6 441.4 160.8 V143 Q441.4 141.2 443.2 141.2 Z" stroke="#3c67ff" stroke-width="2.6" fill="none" stroke-linecap="round" stroke-linejoin="round" /><path d="M448.4 141.2 V148.2 Q448.4 149.4 449.6 149.4 H452.6 Q453.8 149.4 453.8 148.2 V141.2" stroke="#3c67ff" stroke-width="2.4" fill="none" stroke-linecap="round" stroke-linejoin="round" /><path d="M448.4 162.6 V157 H457.2 V162.6" stroke="#3c67ff" stroke-width="2.4" fill="none" stroke-linecap="round" stroke-linejoin="round" /><path d="M486.3 162.8 L486.6 157.4 L502.4 141.6 Q504.2 139.8 506.0 141.6 L507.6 143.2 Q509.4 145.0 507.6 146.8 L491.8 162.6 Z M499.2 144.8 L504.4 150.0" stroke="#3c67ff" stroke-width="2.8" fill="none" stroke-linecap="round" stroke-linejoin="round" /><path d="M533.5 163.1 H526.7 Q525.1 163.1 525.1 161.5 V142.4 Q525.1 140.8 526.7 140.8 H535 L542.4 148.2 V154.4" stroke="#3c67ff" stroke-width="2.2" fill="none" stroke-linecap="round" stroke-linejoin="round" /><path d="M534.4 141.2 V147 Q534.4 148.8 536.2 148.8 H542" stroke="#3c67ff" stroke-width="2.2" fill="none" stroke-linecap="round" stroke-linejoin="round" /><path d="M538 158.2 V155.6 H544.4 V158.2 M537.2 162 H536.8 Q536 162 536 161.2 V159 Q536 158.2 536.8 158.2 H545.6 Q546.4 158.2 546.4 159 V161.2 Q546.4 162 545.6 162 H545.2 M538.4 160.6 H544 V163.2 H538.4 Z" stroke="#3c67ff" stroke-width="1.3" fill="none" stroke-linecap="round" stroke-linejoin="round" /><path d="M569.3 156.2 V160.5 Q569.3 162 567.8 162 H556 Q554.5 162 554.5 160.5 V143.2 Q554.5 141.7 556 141.7 H563.3 L569.3 147.7 V150.6" stroke="#3c67ff" stroke-width="2.2" fill="none" stroke-linecap="round" stroke-linejoin="round" /><path d="M563.2 141.9 V146.4 Q563.2 147.8 564.6 147.8 H569" stroke="#3c67ff" stroke-width="2.2" fill="none" stroke-linecap="round" stroke-linejoin="round" /><path d="M561.8 153.3 H576" stroke="#3c67ff" stroke-width="2.2" fill="none" stroke-linecap="round" stroke-linejoin="round" /><path d="M574 149.4 L578.2 153.3 L574 157.2 Z" fill="#3c67ff" stroke="none" /><path d="M1057.8 139.7 L1053.8 148.6 M1062.8 139.7 L1067 148.6 M1047.8 148.9 H1073.4" stroke="#3c67ff" stroke-width="1.9" fill="none" stroke-linecap="round" stroke-linejoin="round" /><path d="M1049.6 149.6 L1052.6 159.9 Q1053 161.2 1054.4 161.2 H1066.2 Q1067.6 161.2 1068 159.9 L1071.2 149.6" stroke="#3c67ff" stroke-width="1.9" fill="none" stroke-linecap="round" stroke-linejoin="round" /><path d="M1055.6 153.8 V157.2 M1060.3 153.8 V157.2 M1065 153.8 V157.2" stroke="#3c67ff" stroke-width="1.9" fill="none" stroke-linecap="round" stroke-linejoin="round" /><circle cx="1111.1" cy="144.9" r="4.9" stroke="#3c67ff" stroke-width="1.9" fill="none"/><path d="M1101.8 161.9 Q1101.8 154.2 1111.3 154.2 Q1120.8 154.2 1120.8 161.9 Z" stroke="#3c67ff" stroke-width="1.9" fill="none" stroke-linecap="round" stroke-linejoin="round" /><path d="M1122.8 145.6 L1129.4 152.2 M1129.4 145.6 L1122.8 152.2" stroke="#3c67ff" stroke-width="1.9" fill="none" stroke-linecap="round" stroke-linejoin="round" /><path d="M707.4 321.2 H698.6 Q697.3 321.2 697.3 319.9 V302.8 Q697.3 301.5 698.6 301.5 H706.4 L712.7 308.3 V313.7" stroke="#3c67ff" stroke-width="2.0" fill="none" stroke-linecap="round" stroke-linejoin="round" /><path d="M705.2 301.8 V307.4 Q705.2 309.1 706.9 309.1 H712.4" stroke="#3c67ff" stroke-width="2.0" fill="none" stroke-linecap="round" stroke-linejoin="round" /><circle cx="712.9" cy="319.8" r="4.1" stroke="#3c67ff" stroke-width="1.2" fill="none"/><path d="M711 321.3 L712 318.3 M713.4 321.3 L714.4 318.3" stroke="#3c67ff" stroke-width="1.0" fill="none" stroke-linecap="round" stroke-linejoin="round" /><path d="M722.6 301.6 H730 L738.5 310.4 V321.7 Q738.5 323.1 737.1 323.1 H722.6 Q721.2 323.1 721.2 321.7 V303.0 Q721.2 301.6 722.6 301.6 Z" stroke="#3c67ff" stroke-width="2.2" fill="none" stroke-linecap="round" stroke-linejoin="round" /><path d="M730.4 301.9 V308.1 Q730.4 309.5 731.8 309.5 H738.2" stroke="#3c67ff" stroke-width="2.2" fill="none" stroke-linecap="round" stroke-linejoin="round" /><path d="M724.4 307.0 H727.8 M724.4 308.9 H726.8 M726.6 311.7 V314.9 H733.8 M724.5 319.8 H735" stroke="#3c67ff" stroke-width="0.9" fill="none" stroke-linecap="round" stroke-linejoin="round" /><rect x="724.4" y="316.1" width="11.6" height="2.8" fill="#9db1f9"/><g transform="translate(1843.2 294.2) scale(1.13)"><path d="M15 7l-6.5 6.5a1.5 1.5 0 0 0 3 3l6.5 -6.5a3 3 0 0 0 -6 -6l-6.5 6.5a4.5 4.5 0 0 0 9 9l6.5 -6.5" stroke="#3c67ff" stroke-width="2.35" fill="none" stroke-linecap="round" stroke-linejoin="round"/></g><path d="M707.4 422.7 H698.6 Q697.3 422.7 697.3 421.4 V404.3 Q697.3 403 698.6 403 H706.4 L712.7 409.8 V415.2" stroke="#3c67ff" stroke-width="2.0" fill="none" stroke-linecap="round" stroke-linejoin="round" /><path d="M705.2 403.3 V408.9 Q705.2 410.6 706.9 410.6 H712.4" stroke="#3c67ff" stroke-width="2.0" fill="none" stroke-linecap="round" stroke-linejoin="round" /><circle cx="712.9" cy="421.3" r="4.1" stroke="#3c67ff" stroke-width="1.2" fill="none"/><path d="M711 422.8 L712 419.8 M713.4 422.8 L714.4 419.8" stroke="#3c67ff" stroke-width="1.0" fill="none" stroke-linecap="round" stroke-linejoin="round" /><path d="M722.6 403.1 H730 L738.5 411.9 V423.2 Q738.5 424.6 737.1 424.6 H722.6 Q721.2 424.6 721.2 423.2 V404.5 Q721.2 403.1 722.6 403.1 Z" stroke="#3c67ff" stroke-width="2.2" fill="none" stroke-linecap="round" stroke-linejoin="round" /><path d="M730.4 403.4 V409.6 Q730.4 411 731.8 411 H738.2" stroke="#3c67ff" stroke-width="2.2" fill="none" stroke-linecap="round" stroke-linejoin="round" /><path d="M724.4 408.5 H727.8 M724.4 410.4 H726.8 M726.6 413.2 V416.4 H733.8 M724.5 421.3 H735" stroke="#3c67ff" stroke-width="0.9" fill="none" stroke-linecap="round" stroke-linejoin="round" /><rect x="724.4" y="417.6" width="11.6" height="2.8" fill="#9db1f9"/><path d="M707.4 524.2 H698.6 Q697.3 524.2 697.3 522.9 V505.8 Q697.3 504.5 698.6 504.5 H706.4 L712.7 511.3 V516.7" stroke="#3c67ff" stroke-width="2.0" fill="none" stroke-linecap="round" stroke-linejoin="round" /><path d="M705.2 504.8 V510.4 Q705.2 512.1 706.9 512.1 H712.4" stroke="#3c67ff" stroke-width="2.0" fill="none" stroke-linecap="round" stroke-linejoin="round" /><circle cx="712.9" cy="522.8" r="4.1" stroke="#3c67ff" stroke-width="1.2" fill="none"/><path d="M711 524.3 L712 521.3 M713.4 524.3 L714.4 521.3" stroke="#3c67ff" stroke-width="1.0" fill="none" stroke-linecap="round" stroke-linejoin="round" /><path d="M722.6 504.6 H730 L738.5 513.4 V524.7 Q738.5 526.1 737.1 526.1 H722.6 Q721.2 526.1 721.2 524.7 V506.0 Q721.2 504.6 722.6 504.6 Z" stroke="#3c67ff" stroke-width="2.2" fill="none" stroke-linecap="round" stroke-linejoin="round" /><path d="M730.4 504.9 V511.1 Q730.4 512.5 731.8 512.5 H738.2" stroke="#3c67ff" stroke-width="2.2" fill="none" stroke-linecap="round" stroke-linejoin="round" /><path d="M724.4 510.0 H727.8 M724.4 511.9 H726.8 M726.6 514.7 V517.9 H733.8 M724.5 522.8 H735" stroke="#3c67ff" stroke-width="0.9" fill="none" stroke-linecap="round" stroke-linejoin="round" /><rect x="724.4" y="519.1" width="11.6" height="2.8" fill="#9db1f9"/><g transform="translate(1843.2 497.2) scale(1.13)"><path d="M15 7l-6.5 6.5a1.5 1.5 0 0 0 3 3l6.5 -6.5a3 3 0 0 0 -6 -6l-6.5 6.5a4.5 4.5 0 0 0 9 9l6.5 -6.5" stroke="#3c67ff" stroke-width="2.35" fill="none" stroke-linecap="round" stroke-linejoin="round"/></g><path d="M707.4 562.2 H698.6 Q697.3 562.2 697.3 560.9 V543.8 Q697.3 542.5 698.6 542.5 H706.4 L712.7 549.3 V554.7" stroke="#3c67ff" stroke-width="2.0" fill="none" stroke-linecap="round" stroke-linejoin="round" /><path d="M705.2 542.8 V548.4 Q705.2 550.1 706.9 550.1 H712.4" stroke="#3c67ff" stroke-width="2.0" fill="none" stroke-linecap="round" stroke-linejoin="round" /><circle cx="712.9" cy="560.8" r="4.1" stroke="#3c67ff" stroke-width="1.2" fill="none"/><path d="M711 562.3 L712 559.3 M713.4 562.3 L714.4 559.3" stroke="#3c67ff" stroke-width="1.0" fill="none" stroke-linecap="round" stroke-linejoin="round" /><path d="M722.6 542.6 H730 L738.5 551.4 V562.7 Q738.5 564.1 737.1 564.1 H722.6 Q721.2 564.1 721.2 562.7 V544.0 Q721.2 542.6 722.6 542.6 Z" stroke="#3c67ff" stroke-width="2.2" fill="none" stroke-linecap="round" stroke-linejoin="round" /><path d="M730.4 542.9 V549.1 Q730.4 550.5 731.8 550.5 H738.2" stroke="#3c67ff" stroke-width="2.2" fill="none" stroke-linecap="round" stroke-linejoin="round" /><path d="M724.4 548.0 H727.8 M724.4 549.9 H726.8 M726.6 552.7 V555.9 H733.8 M724.5 560.8 H735" stroke="#3c67ff" stroke-width="0.9" fill="none" stroke-linecap="round" stroke-linejoin="round" /><rect x="724.4" y="557.1" width="11.6" height="2.8" fill="#9db1f9"/><g transform="translate(1843.2 535.2) scale(1.13)"><path d="M15 7l-6.5 6.5a1.5 1.5 0 0 0 3 3l6.5 -6.5a3 3 0 0 0 -6 -6l-6.5 6.5a4.5 4.5 0 0 0 9 9l6.5 -6.5" stroke="#3c67ff" stroke-width="2.35" fill="none" stroke-linecap="round" stroke-linejoin="round"/></g><path d="M707.4 600.2 H698.6 Q697.3 600.2 697.3 598.9 V581.8 Q697.3 580.5 698.6 580.5 H706.4 L712.7 587.3 V592.7" stroke="#3c67ff" stroke-width="2.0" fill="none" stroke-linecap="round" stroke-linejoin="round" /><path d="M705.2 580.8 V586.4 Q705.2 588.1 706.9 588.1 H712.4" stroke="#3c67ff" stroke-width="2.0" fill="none" stroke-linecap="round" stroke-linejoin="round" /><circle cx="712.9" cy="598.8" r="4.1" stroke="#3c67ff" stroke-width="1.2" fill="none"/><path d="M711 600.3 L712 597.3 M713.4 600.3 L714.4 597.3" stroke="#3c67ff" stroke-width="1.0" fill="none" stroke-linecap="round" stroke-linejoin="round" /><path d="M722.6 580.6 H730 L738.5 589.4 V600.7 Q738.5 602.1 737.1 602.1 H722.6 Q721.2 602.1 721.2 600.7 V582.0 Q721.2 580.6 722.6 580.6 Z" stroke="#3c67ff" stroke-width="2.2" fill="none" stroke-linecap="round" stroke-linejoin="round" /><path d="M730.4 580.9 V587.1 Q730.4 588.5 731.8 588.5 H738.2" stroke="#3c67ff" stroke-width="2.2" fill="none" stroke-linecap="round" stroke-linejoin="round" /><path d="M724.4 586.0 H727.8 M724.4 587.9 H726.8 M726.6 590.7 V593.9 H733.8 M724.5 598.8 H735" stroke="#3c67ff" stroke-width="0.9" fill="none" stroke-linecap="round" stroke-linejoin="round" /><rect x="724.4" y="595.1" width="11.6" height="2.8" fill="#9db1f9"/><g transform="translate(1843.2 573.2) scale(1.13)"><path d="M15 7l-6.5 6.5a1.5 1.5 0 0 0 3 3l6.5 -6.5a3 3 0 0 0 -6 -6l-6.5 6.5a4.5 4.5 0 0 0 9 9l6.5 -6.5" stroke="#3c67ff" stroke-width="2.35" fill="none" stroke-linecap="round" stroke-linejoin="round"/></g><path d="M854.5 304.1 H857.4 Q858.6 304.1 858.6 305.3 V320.9 Q858.6 322.7 856.6 322.7 Q854.5 322.7 854.5 320.7 V301.4 Q854.5 300.4 853.5 300.4 H838.4 Q837.4 300.4 837.4 301.4 V319.7 Q837.4 322.7 840.4 322.7 H856.6" stroke="#3c67ff" stroke-width="1.4" fill="none" stroke-linecap="round" stroke-linejoin="round" /><path d="M840.2 303.9 H846.5 V311.0 H840.2 Z M848.7 304.1 H852.6 M848.7 307.3 H852.6 M848.7 310.5 H852.6 M840.2 314.3 H852.6 M840.2 317.5 H852.6" stroke="#3c67ff" stroke-width="1.3" fill="none" stroke-linecap="round" stroke-linejoin="round" /><path d="M838 424.6 V405.2 Q838 403 840.6 403 H854.6 V406" stroke="#3c67ff" stroke-width="1.4" fill="none" stroke-linecap="round" stroke-linejoin="round" /><path d="M838 405.2 Q838 407.4 840.6 407.4 H858.2 V424.6 H840.6 Q838 424.6 838 422" stroke="#3c67ff" stroke-width="1.4" fill="none" stroke-linecap="round" stroke-linejoin="round" /><path d="M850.6 407.6 V419.6 L852.7 417.6 L854.8 419.6 V407.6" stroke="#3c67ff" stroke-width="1.4" fill="none" stroke-linecap="round" stroke-linejoin="round" /><path d="M854.5 507.1 H857.4 Q858.6 507.1 858.6 508.3 V523.9 Q858.6 525.7 856.6 525.7 Q854.5 525.7 854.5 523.7 V504.4 Q854.5 503.4 853.5 503.4 H838.4 Q837.4 503.4 837.4 504.4 V522.7 Q837.4 525.7 840.4 525.7 H856.6" stroke="#3c67ff" stroke-width="1.4" fill="none" stroke-linecap="round" stroke-linejoin="round" /><path d="M840.2 506.9 H846.5 V514.0 H840.2 Z M848.7 507.1 H852.6 M848.7 510.3 H852.6 M848.7 513.5 H852.6 M840.2 517.3 H852.6 M840.2 520.5 H852.6" stroke="#3c67ff" stroke-width="1.3" fill="none" stroke-linecap="round" stroke-linejoin="round" /><path d="M854.5 545.1 H857.4 Q858.6 545.1 858.6 546.3 V561.9 Q858.6 563.7 856.6 563.7 Q854.5 563.7 854.5 561.7 V542.4 Q854.5 541.4 853.5 541.4 H838.4 Q837.4 541.4 837.4 542.4 V560.7 Q837.4 563.7 840.4 563.7 H856.6" stroke="#3c67ff" stroke-width="1.4" fill="none" stroke-linecap="round" stroke-linejoin="round" /><path d="M840.2 544.9 H846.5 V552.0 H840.2 Z M848.7 545.1 H852.6 M848.7 548.3 H852.6 M848.7 551.5 H852.6 M840.2 555.3 H852.6 M840.2 558.5 H852.6" stroke="#3c67ff" stroke-width="1.3" fill="none" stroke-linecap="round" stroke-linejoin="round" /><path d="M838 602.1 V582.7 Q838 580.5 840.6 580.5 H854.6 V583.5" stroke="#3c67ff" stroke-width="1.4" fill="none" stroke-linecap="round" stroke-linejoin="round" /><path d="M838 582.7 Q838 584.9 840.6 584.9 H858.2 V602.1 H840.6 Q838 602.1 838 599.5" stroke="#3c67ff" stroke-width="1.4" fill="none" stroke-linecap="round" stroke-linejoin="round" /><path d="M850.6 585.1 V597.1 L852.7 595.1 L854.8 597.1 V585.1" stroke="#3c67ff" stroke-width="1.4" fill="none" stroke-linecap="round" stroke-linejoin="round" /><path d="M868.4 220.9 V227.6 M871.6 220.9 V227.6 M866.6 227.1 L870 229.8 L873.4 227.1" stroke="#111" stroke-width="1.0" fill="none" stroke-linecap="round" stroke-linejoin="round" /><path d="M1046.4 229.8 V223.1 M1049.6 229.8 V223.1 M1044.6 223.6 L1048 220.9 L1051.4 223.6" stroke="#111" stroke-width="1.0" fill="none" stroke-linecap="round" stroke-linejoin="round" /><text x="1214.3" y="223.1" font-family="Liberation Sans" font-weight="bold" font-size="11.4" fill="#3c67ff" stroke="#3c67ff" stroke-width="0.35">3</text><text x="1223.6" y="231" font-family="Liberation Sans" font-weight="bold" font-size="11.4" fill="#3c67ff" stroke="#3c67ff" stroke-width="0.35">2</text><text x="1231.2" y="239" font-family="Liberation Sans" font-weight="bold" font-size="11.4" fill="#3c67ff" stroke="#3c67ff" stroke-width="0.35">1</text><path d="M1218.2 238.4 V225.8 M1213.6 229.6 L1218.2 225.6 L1222.6 229.6" stroke="#3c67ff" stroke-width="1.3" fill="none" stroke-linecap="round" stroke-linejoin="round" /><rect x="1783" y="333.8" width="86" height="156" fill="#fff"/><rect x="1786" y="337.3" width="79" height="146.3" fill="#ebe8de"/><rect x="1786" y="337.3" width="79" height="2.5" fill="#e2ded2"/><rect x="1862.5" y="337.3" width="2.5" height="146.3" fill="#e4e0d4"/><text x="1794.5" y="355.8" font-family="Liberation Serif" font-size="3.7" font-weight="bold" fill="#6a6a6a" letter-spacing="0.25">BIBLIOTHEQUE POPULAIRE</text><rect x="1801" y="358.8" width="34" height="0.9" fill="#c4c0b6"/><rect x="1788" y="363.6" width="62" height="0.7" fill="#a8a59d"/><text x="1799.5" y="381.2" font-family="Liberation Serif" font-size="11.5" font-weight="bold" fill="#5a5a58" letter-spacing="1.5">DIJON</text><text x="1786.3" y="392.2" font-family="Liberation Serif" font-size="5.1" font-weight="bold" fill="#6a6a68" letter-spacing="0.5">HISTOIRE ET TABLEAU</text><rect x="1797" y="396.4" width="40" height="0.9" fill="#bdb9af"/><rect x="1788" y="403" width="60" height="0.9" fill="#b5b1a7"/><text x="1804" y="412" font-family="Liberation Serif" font-size="3.6" font-weight="bold" fill="#5a5a58" letter-spacing="0.2">PAR JOSEPH BARD</text><rect x="1808" y="415.6" width="20" height="0.9" fill="#bdb9af"/><circle cx="1798.7" cy="420.7" r="8.2" fill="none" stroke="#dcc0b6" stroke-width="1"/><circle cx="1798.7" cy="420.7" r="4.8" fill="none" stroke="#e2cac0" stroke-width="0.9"/><path d="M1807 438.5 Q1808 429 1814 427.5 Q1820 424.5 1826 429.5 Q1830 434 1828 439 Q1822 442 1816 441.5 Q1810 441.5 1807 438.5 Z" fill="#8c8a82" fill-opacity="0.75"/><path d="M1810 436 Q1814 431 1818 434 Q1822 429 1826 435" stroke="#555" stroke-width="0.9" fill="none"/><rect x="1794" y="449.6" width="12" height="0.9" fill="#aaa69c"/><rect x="1829" y="449.6" width="12" height="0.9" fill="#aaa69c"/><rect x="1788" y="453.8" width="27" height="0.9" fill="#aaa69c"/><rect x="1822" y="453.8" width="28" height="0.9" fill="#aaa69c"/><rect x="1791" y="457.6" width="20" height="0.9" fill="#b8b4aa"/><rect x="1825" y="457.6" width="20" height="0.9" fill="#b8b4aa"/><rect x="1817" y="448" width="0.7" height="13" fill="#aaa69c"/><rect x="1809" y="464.2" width="20" height="0.9" fill="#aaa69c"/><rect x="1828" y="485.8" width="38" height="0.9" fill="#c8c8c8"/><path d="M1012.6 912.4 L1006 921 L1012.4 929.6 M1022.6 912.4 L1016 921 L1022.4 929.6" stroke="#8aa6fc" stroke-width="2.6" fill="none" stroke-linecap="round" stroke-linejoin="round" /><path d="M1042.2 913 V929 Q1042.2 930 1041.2 929.3 L1031.4 921.6 Q1030.6 921 1031.4 920.4 L1041.2 912.7 Q1042.2 912 1042.2 913 Z" stroke="#8aa6fc" stroke-width="2.6" fill="none" stroke-linecap="round" stroke-linejoin="round" /><path d="M1193 913 V929 Q1193 930 1194 929.3 L1203.8 921.6 Q1204.6 921 1203.8 920.4 L1194 912.7 Q1193 912 1193 913 Z" stroke="#8aa6fc" stroke-width="2.6" fill="none" stroke-linecap="round" stroke-linejoin="round" /><path d="M1215 912.4 L1221.6 921 L1215.2 929.6 M1225 912.4 L1231.6 921 L1225.2 929.6" stroke="#8aa6fc" stroke-width="2.6" fill="none" stroke-linecap="round" stroke-linejoin="round" /></svg>
</body></html>
